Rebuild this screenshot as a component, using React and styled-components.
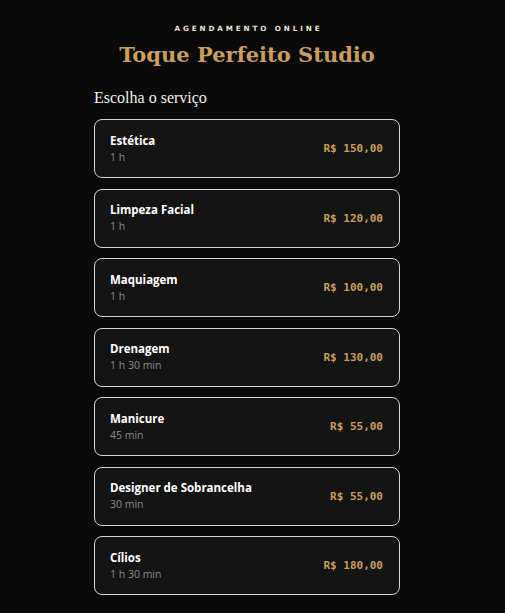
import React from "react";
import styled, { createGlobalStyle } from "styled-components";

const Global = createGlobalStyle`
  html, body { margin: 0; padding: 0; background: #0a0a0a; }
  body { font-family: "Open Sans", "Noto Sans", sans-serif; }
`;

const Page = styled.main`
  min-height: 613px;
  box-sizing: border-box;
  background: #0a0a0a;
  padding: 24px 11px 24px 0;
  display: flex;
  flex-direction: column;
  align-items: center;
`;

const Header = styled.header`
  display: flex;
  flex-direction: column;
  align-items: center;
  gap: 5px;
`;

const Eyebrow = styled.div`
  font-family: "DejaVu Sans", sans-serif;
  font-size: 7.2px;
  font-weight: 700;
  letter-spacing: 2.9px;
  color: #e6e0d6;
  padding-left: 2.9px;
  line-height: 10px;
`;

const Title = styled.h1`
  margin: 0;
  font-family: "DejaVu Serif", Georgia, serif;
  font-size: 21px;
  font-weight: 700;
  color: #c99e5e;
  line-height: 32px;
`;

const Section = styled.section`
  width: 306px;
  margin-top: 16px;
`;

const SectionTitle = styled.h2`
  margin: 0 0 10px;
  font-family: "Liberation Serif", Georgia, serif;
  font-size: 16px;
  font-weight: 400;
  color: #f2efe9;
  line-height: 22px;
`;

const List = styled.ul`
  list-style: none;
  margin: 0;
  padding: 0;
  display: flex;
  flex-direction: column;
  gap: 10.5px;
`;

const Card = styled.li`
  height: 59px;
  box-sizing: border-box;
  border: 1px solid #d4d4d4;
  border-radius: 8px;
  background: #141414;
  padding: 0 16px 0 15px;
  display: flex;
  align-items: center;
  justify-content: space-between;
`;

const Info = styled.div`
  display: flex;
  flex-direction: column;
  gap: 1px;
`;

const Name = styled.div`
  font-size: 11.5px;
  font-weight: 700;
  color: #ffffff;
  line-height: 16px;
`;

const Duration = styled.div`
  font-size: 10.5px;
  color: #8a8a8a;
  line-height: 15px;
`;

const Price = styled.div`
  font-family: "DejaVu Sans Mono", "Liberation Mono", monospace;
  font-size: 11px;
  font-weight: 700;
  color: #c99e5e;
`;

const services = [
  { name: "Estética", duration: "1 h", price: "R$ 150,00" },
  { name: "Limpeza Facial", duration: "1 h", price: "R$ 120,00" },
  { name: "Maquiagem", duration: "1 h", price: "R$ 100,00" },
  { name: "Drenagem", duration: "1 h 30 min", price: "R$ 130,00" },
  { name: "Manicure", duration: "45 min", price: "R$ 55,00" },
  { name: "Designer de Sobrancelha", duration: "30 min", price: "R$ 55,00" },
  { name: "Cílios", duration: "1 h 30 min", price: "R$ 180,00" },
];

export default function App() {
  return (
    <>
      <Global />
      <Page>
        <Header>
          <Eyebrow>AGENDAMENTO ONLINE</Eyebrow>
          <Title>Toque Perfeito Studio</Title>
        </Header>
        <Section>
          <SectionTitle>Escolha o serviço</SectionTitle>
          <List>
            {services.map((s) => (
              <Card key={s.name}>
                <Info>
                  <Name>{s.name}</Name>
                  <Duration>{s.duration}</Duration>
                </Info>
                <Price>{s.price}</Price>
              </Card>
            ))}
          </List>
        </Section>
      </Page>
    </>
  );
}
